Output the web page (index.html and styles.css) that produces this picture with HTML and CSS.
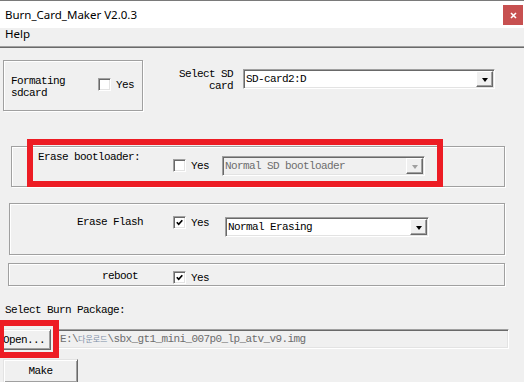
FILE: index.html
```html
<!DOCTYPE html>
<html lang="en">

<head>
  <meta charset="UTF-8">
  <meta name="viewport" content="width=device-width, initial-scale=1.0">
  <title>Burn_Card_Maker V2.0.3</title>
  <link rel="stylesheet" href="styles.css">
</head>

<body>
  <div class="window">
    <div class="titlebar">
      <span class="title">Burn_Card_Maker V2.0.3</span>
      <span class="close">
        <svg width="7" height="7" viewBox="0 0 7 7">
          <path d="M1 1 L6 6 M6 1 L1 6" stroke="#fff" stroke-width="1.6" fill="none" />
        </svg>
      </span>
    </div>
    <div class="menubar"><span class="menu_item">Help</span></div>
    <div class="sep"></div>

    <div class="client">
      <div class="row1">
        <div class="group gb_format">
          <div class="lbl lbl_format">Formating<br>sdcard</div>
          <label class="check chk_format"><span class="box"></span>Yes</label>
        </div>
        <div class="lbl lbl_sd">Select SD<br>card</div>
        <div class="combo combo_sd">
          <span class="combo_text">SD-card2:D</span>
          <span class="drop"><i class="arrow"></i></span>
        </div>
      </div>

      <div class="group gb_boot">
        <div class="lbl lbl_boot">Erase bootloader:</div>
        <label class="check chk_boot"><span class="box"></span>Yes</label>
        <div class="combo combo_boot disabled">
          <span class="combo_text">Normal SD bootloader</span>
          <span class="drop"><i class="arrow"></i></span>
        </div>
      </div>

      <div class="group gb_flash">
        <div class="lbl lbl_flash">Erase Flash</div>
        <label class="check chk_flash">
          <span class="box">
            <svg width="7" height="7" viewBox="0 0 7 7">
              <path d="M0.8 3.2 L2.7 5.3 L6.3 1.2" stroke="#000" stroke-width="1.7" fill="none" />
            </svg>
          </span>Yes
        </label>
        <div class="combo combo_flash">
          <span class="combo_text">Normal Erasing</span>
          <span class="drop"><i class="arrow"></i></span>
        </div>
      </div>

      <div class="group gb_reboot">
        <div class="lbl lbl_reboot">reboot</div>
        <label class="check chk_reboot">
          <span class="box">
            <svg width="7" height="7" viewBox="0 0 7 7">
              <path d="M0.8 3.2 L2.7 5.3 L6.3 1.2" stroke="#000" stroke-width="1.7" fill="none" />
            </svg>
          </span>Yes
        </label>
      </div>

      <div class="lbl lbl_pkg">Select Burn Package:</div>

      <div class="open_row">
        <button type="button" class="btn open_btn">Open...</button>
        <div class="path">E:\<span class="ko">다운로드</span>\sbx_gt1_mini_007p0_lp_atv_v9.img</div>
      </div>

      <button type="button" class="btn make_btn">Make</button>
    </div>

    <div class="mark mark_boot"></div>
    <div class="mark mark_open"></div>
  </div>
</body>

</html>
```

FILE: styles.css
```css
* {
  box-sizing: border-box;
}

body {
  margin: 0;
  width: 524px;
  height: 382px;
  overflow: hidden;
  background-color: #f0f0f0;
}

.window {
  position: relative;
  width: 524px;
  height: 382px;
}

.titlebar {
  height: 28px;

  display: flex;
  justify-content: space-between;
  align-items: flex-start;

  border-top: 1px solid #7a7a7a;
  background-color: #fff;
}

.title {
  margin: 7px 0 0 5px;
  font-family: "Noto Sans", sans-serif;
  font-size: 11.5px;
  line-height: 13px;
  color: #000;
}

.close {
  width: 20px;
  height: 20px;

  display: flex;
  justify-content: center;
  align-items: center;

  margin: 4px 1px 0 0;
  background-color: #c75050;
}

.menubar {
  height: 18px;
  padding-left: 5px;
  background-color: #f0f0f0;
}

.menu_item {
  display: block;
  font-family: "Noto Sans", sans-serif;
  font-size: 11.5px;
  line-height: 11px;
  color: #000;
}

.sep {
  height: 2px;
  border-top: 1px solid #a0a0a0;
  border-bottom: 1px solid #6a6a6a;
}

.client {
  display: flex;
  flex-direction: column;
  align-items: flex-start;
}

.lbl,
.check,
.combo,
.path,
.btn {
  font-family: "Liberation Mono", "Noto Sans CJK KR", monospace;
  font-size: 11px;
  letter-spacing: -0.6px;
  line-height: 12px;
  color: #000;
  white-space: nowrap;
}

.group {
  display: flex;
  align-items: flex-start;

  border: 1px solid #a0a0a0;
  box-shadow: 1px 1px 0 #fff, inset 1px 1px 0 #fff;
}

.check {
  display: flex;
  align-items: center;
  gap: 5px;
}

.box {
  width: 13px;
  height: 13px;

  display: flex;
  justify-content: center;
  align-items: center;

  border: 1px solid;
  border-color: #a0a0a0 #fff #fff #a0a0a0;
  box-shadow: inset 1px 1px 0 #696969, inset -1px -1px 0 #e3e3e3;
  background-color: #fff;
}

.combo {
  height: 20px;

  display: flex;
  justify-content: space-between;
  align-items: center;

  padding: 0 1px 0 1px;
  border: 1px solid;
  border-color: #a0a0a0 #fff #fff #a0a0a0;
  box-shadow: inset 1px 1px 0 #696969, inset -1px -1px 0 #e3e3e3;
  background-color: #fff;
}

.combo_text {
  padding-left: 1px;
}

.drop {
  width: 17px;
  height: 16px;

  display: flex;
  justify-content: center;
  align-items: center;

  border: 1px solid;
  border-color: #fff #696969 #696969 #fff;
  box-shadow: inset -1px -1px 0 #a0a0a0;
  background-color: #f0f0f0;
}

.arrow {
  width: 0;
  height: 0;
  margin-top: 1px;
  border-left: 3px solid transparent;
  border-right: 3px solid transparent;
  border-top: 4px solid #000;
}

.disabled {
  background-color: #f0f0f0;
  color: #6d6d6d;
}

.disabled .arrow {
  border-top-color: #a0a0a0;
}

/* row 1 */
.row1 {
  display: flex;
  align-items: flex-start;
  margin: 12px 0 0 3px;
}

.gb_format {
  width: 140px;
  height: 51px;
}

.lbl_format {
  width: 87px;
  margin: 14px 0 0 7px;
}

.chk_format {
  margin-top: 17px;
}

.lbl_sd {
  width: 90px;
  margin-top: 8px;
  text-align: right;
}

.combo_sd {
  width: 252px;
  margin: 9px 0 0 10px;
}

/* erase bootloader */
.gb_boot {
  width: 494px;
  height: 41px;
  margin: 35px 0 0 11px;
}

.lbl_boot {
  width: 135px;
  margin: 4px 0 0 26px;
}

.chk_boot {
  width: 49px;
  margin-top: 12px;
}

.combo_boot {
  width: 203px;
  margin-top: 9px;
}

/* erase flash */
.gb_flash {
  width: 496px;
  height: 52px;
  margin: 16px 0 0 9px;
}

.lbl_flash {
  width: 96px;
  margin: 12px 0 0 67px;
}

.chk_flash {
  width: 52px;
  margin-top: 12px;
}

.combo_flash {
  width: 204px;
  margin-top: 13px;
}

/* reboot */
.gb_reboot {
  width: 497px;
  height: 23px;
  margin: 8px 0 0 8px;
}

.lbl_reboot {
  width: 71px;
  margin: 6px 0 0 93px;
}

.chk_reboot {
  margin-top: 7px;
}

/* package */
.lbl_pkg {
  margin: 18px 0 0 5px;
}

.open_row {
  display: flex;
  align-items: flex-start;
  margin-top: 13px;
}

.btn {
  margin: 0;
  padding: 0;

  border: 1px solid;
  border-color: #e3e3e3 #696969 #696969 #e3e3e3;
  box-shadow: inset 1px 1px 0 #fff, inset -1px -1px 0 #a0a0a0;
  background-color: #f0f0f0;
}

.open_btn {
  width: 51px;
  height: 21px;
  padding-left: 2px;
  text-align: left;
}

.path {
  width: 452px;
  height: 20px;

  display: flex;
  align-items: center;

  margin-left: 6px;
  padding-left: 2px;
  border: 1px solid;
  border-color: #a0a0a0 #fff #fff #a0a0a0;
  box-shadow: inset 1px 1px 0 #696969, inset -1px -1px 0 #e3e3e3;
  color: #6d6d6d;
}

.ko {
  font-family: "Noto Sans CJK KR", sans-serif;
  font-size: 8px;
  letter-spacing: 0;
  color: #7d8fa8;
}

.make_btn {
  width: 75px;
  height: 24px;
  margin: 9px 0 0 3px;
  text-align: center;
}

/* red annotation boxes */
.mark {
  position: absolute;
  border: 6px solid #ed1c24;
}

.mark_boot {
  left: 27px;
  top: 139px;
  width: 416px;
  height: 48px;
}

.mark_open {
  left: -2px;
  top: 320px;
  width: 61px;
  height: 38px;
}
```
